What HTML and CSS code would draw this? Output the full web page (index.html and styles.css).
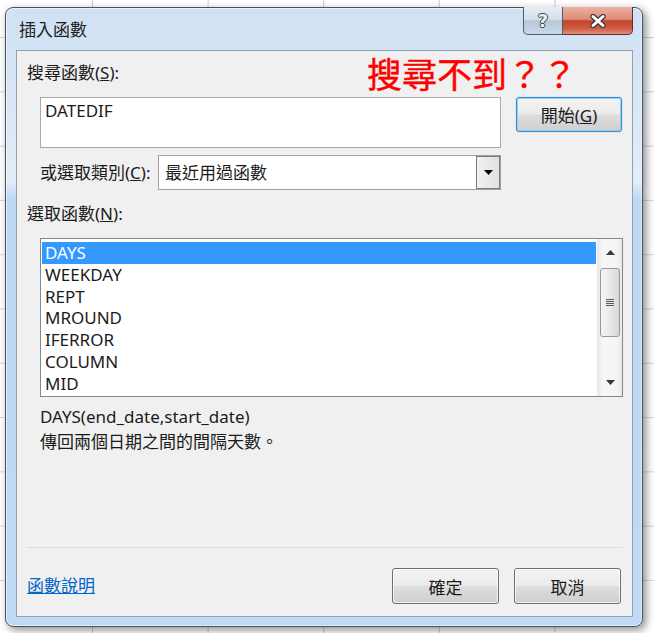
FILE: index.html
```html
<!DOCTYPE html>
<html lang="zh-Hant-TW">
    <head>
        <meta charset="UTF-8" />
        <title>插入函數</title>
        <link rel="stylesheet" href="styles.css">
    </head>
    <body>
    <div class="dialog">
        <div class="titlebar">
            <span class="title">插入函數</span>
            <div class="caption-buttons">
                <span class="cap-btn help">?</span>
                <span class="cap-btn close">
                    <svg width="20" height="14" viewBox="0 0 20 14">
                        <path d="M5 2.5 L15 11.5 M15 2.5 L5 11.5" stroke="#3b3b3b" stroke-width="5.4" stroke-linecap="round" fill="none"/>
                        <path d="M5 2.5 L15 11.5 M15 2.5 L5 11.5" stroke="#ffffff" stroke-width="3" stroke-linecap="round" fill="none"/>
                    </svg>
                </span>
            </div>
        </div>
        <div class="client">
            <div class="search-head">
                <span class="label">搜尋函數(<u>S</u>):</span>
                <span class="note">搜尋不到？？</span>
            </div>
            <div class="search-row">
                <div class="textbox">DATEDIF</div>
                <button class="btn default">開始(<u>G</u>)</button>
            </div>
            <div class="category-row">
                <span class="label cat-label">或選取類別(<u>C</u>):</span>
                <div class="select">
                    <span class="select-text">最近用過函數</span>
                    <span class="drop">
                        <svg width="9" height="5" viewBox="0 0 9 5"><path d="M0 0 H9 L4.5 5 Z" fill="#000"/></svg>
                    </span>
                </div>
            </div>
            <div class="list-head">
                <span class="label">選取函數(<u>N</u>):</span>
            </div>
            <div class="listbox">
                <ul class="items">
                    <li class="selected">DAYS</li>
                    <li>WEEKDAY</li>
                    <li>REPT</li>
                    <li>MROUND</li>
                    <li>IFERROR</li>
                    <li>COLUMN</li>
                    <li>MID</li>
                </ul>
                <div class="scrollbar">
                    <span class="arrow">
                        <svg width="9" height="5" viewBox="0 0 9 5"><path d="M0 5 H9 L4.5 0 Z" fill="#3a3a3a"/></svg>
                    </span>
                    <span class="thumb"><span class="grip"></span></span>
                    <span class="track"></span>
                    <span class="arrow">
                        <svg width="9" height="5" viewBox="0 0 9 5"><path d="M0 0 H9 L4.5 5 Z" fill="#3a3a3a"/></svg>
                    </span>
                </div>
            </div>
            <p class="syntax">DAYS(end_date,start_date)</p>
            <p class="desc">傳回兩個日期之間的間隔天數。</p>
            <div class="spacer"></div>
            <div class="sep"></div>
            <div class="footer">
                <a class="help-link" href="#">函數說明</a>
                <div class="actions">
                    <button class="btn">確定</button>
                    <button class="btn">取消</button>
                </div>
            </div>
        </div>
    </div>
    </body>
</html>
```

FILE: styles.css
```css
    body {
        margin: 0;
        width: 654px;
        height: 633px;
        overflow: hidden;
        background-color: #ffffff;
        background-image:
            linear-gradient(to right, #cdcdcd 1px, transparent 1px),
            linear-gradient(to bottom, #d6d6d6 1px, transparent 1px);
        background-size: 115.6px 100%, 100% 54.3px;
        background-position: 92px 0, 0 37px;
        font-family: "Noto Sans", "Noto Sans CJK TC", sans-serif;
        font-size: 17px;
        color: #1b1b1b;
    }
    .dialog {
        box-sizing: border-box;
        width: 638px;
        height: 620px;
        margin: 7px 0 0 5px;
        padding: 0 9px 9px 10px;
        display: flex;
        flex-direction: column;
        border: 1px solid #46525e;
        border-radius: 8px;
        background: linear-gradient(180deg, #cfe1f4 0, #dbe8f6 18%, #e3edf8 28%, #bcd7f2 31%, #c1daf3 100%);
        box-shadow: inset 0 0 0 1px rgba(255, 255, 255, 0.55), 3px 3px 8px rgba(0, 0, 0, 0.45);
    }
    .titlebar {
        height: 42px;
        display: flex;
        justify-content: space-between;
        align-items: flex-start;
    }
    .title {
        margin: 12px 0 0 3px;
        line-height: 20px;
        font-size: 17px;
        color: #1e1e1e;
    }
    .caption-buttons {
        display: flex;
        margin-top: -1px;
    }
    .cap-btn {
        box-sizing: border-box;
        height: 28px;
        display: flex;
        align-items: center;
        justify-content: center;
    }
    .help {
        width: 40px;
        border: 1px solid #4e5c6b;
        border-top: none;
        border-radius: 0 0 0 5px;
        background: linear-gradient(180deg, #e6edf5 0, #d5e0ec 45%, #b7c8da 52%, #c9d8e7 100%);
        font-family: "DejaVu Sans", sans-serif;
        font-weight: bold;
        font-size: 18px;
        color: #eeeeee;
        text-shadow: 1px 0 0 #3c4650, -1px 0 0 #3c4650, 0 1px 0 #3c4650, 0 -1px 0 #3c4650;
    }
    .close {
        width: 70px;
        border: 1px solid #5b302a;
        border-left: none;
        border-top: none;
        border-radius: 0 0 5px 0;
        background: linear-gradient(180deg, #eab0a2 0, #dd8c79 45%, #c4422b 52%, #cf5d44 80%, #e39079 100%);
    }
    .client {
        flex: 1;
        display: flex;
        flex-direction: column;
        padding: 0 10px 12px 10px;
        border: 1px solid #8fa1b4;
        background-color: #f0f0f0;
    }
    .label {
        line-height: 20px;
        white-space: nowrap;
    }
    .search-head {
        height: 46px;
        display: flex;
        align-items: center;
    }
    .search-head .label {
        margin-bottom: 3px;
    }
    .note {
        margin: 2px 45px 0 auto;
        font-size: 35px;
        line-height: 40px;
        color: #ff0000;
        -webkit-text-stroke: 0.4px #ff0000;
    }
    .search-row {
        display: flex;
        align-items: flex-start;
    }
    .textbox {
        box-sizing: border-box;
        width: 461px;
        height: 51px;
        margin-left: 13px;
        padding: 2px 4px;
        line-height: 22px;
        background: #ffffff;
        border: 1px solid #a8a8a8;
    }
    .btn {
        box-sizing: border-box;
        width: 107px;
        height: 36px;
        padding: 0;
        font-family: "Noto Sans", "Noto Sans CJK TC", sans-serif;
        font-size: 17px;
        color: #1b1b1b;
        border: 1px solid #707070;
        border-radius: 3px;
        background: linear-gradient(180deg, #f3f3f3 0, #ebebeb 48%, #dddddd 52%, #cfcfcf 100%);
        box-shadow: inset 0 0 0 1px rgba(255, 255, 255, 0.7);
    }
    .btn.default {
        margin-left: auto;
        width: 106px;
        height: 35px;
        border-color: #3c8ccf;
        box-shadow: inset 0 0 0 1px #8fd0f3, 0 0 1px #3c8ccf;
    }
    .category-row {
        margin-top: 7px;
        height: 35px;
        display: flex;
        align-items: center;
    }
    .cat-label {
        width: 118px;
        margin-left: 13px;
    }
    .select {
        box-sizing: border-box;
        width: 343px;
        height: 35px;
        display: flex;
        align-items: stretch;
        background: #ffffff;
        border: 1px solid #a0a0a0;
    }
    .select-text {
        flex: 1;
        padding-left: 6px;
        line-height: 33px;
    }
    .drop {
        box-sizing: border-box;
        width: 24px;
        display: flex;
        align-items: center;
        justify-content: center;
        border: 1px solid #7b7b7b;
        background: linear-gradient(90deg, #f2f2f2 0, #e0e0e0 100%);
    }
    .list-head {
        height: 48px;
        display: flex;
        align-items: center;
    }
    .listbox {
        box-sizing: border-box;
        width: 583px;
        height: 159px;
        margin-left: 13px;
        display: flex;
        background: #ffffff;
        border: 1px solid #828790;
    }
    .items {
        flex: 1;
        list-style: none;
        margin: 0;
        padding: 3px 1px 0 1px;
    }
    .items li {
        height: 21.8px;
        line-height: 21.8px;
        padding-left: 3px;
    }
    .items li.selected {
        background-color: #3399ff;
        color: #ffffff;
    }
    .scrollbar {
        width: 24px;
        display: flex;
        flex-direction: column;
        align-items: center;
        background: linear-gradient(90deg, #e9e9e9 0, #f7f7f7 20%, #f4f4f4 80%, #e9e9e9 100%);
        border-left: 1px solid #ececec;
    }
    .arrow {
        height: 27px;
        display: flex;
        align-items: center;
        justify-content: center;
    }
    .thumb {
        box-sizing: border-box;
        width: 20px;
        height: 69px;
        margin-top: 2px;
        display: flex;
        align-items: center;
        justify-content: center;
        border: 1px solid #979797;
        border-radius: 3px;
        background: linear-gradient(90deg, #f5f5f5 0, #e9e9e9 50%, #d6d6d6 100%);
    }
    .grip {
        width: 8px;
        height: 7px;
        background: repeating-linear-gradient(180deg, #5d5d5d 0, #5d5d5d 1px, #e4e4e4 1px, #e4e4e4 2px);
    }
    .track {
        flex: 1;
    }
    .syntax,
    .desc {
        margin: 0 0 0 13px;
        line-height: 25px;
    }
    .syntax {
        margin-top: 7px;
    }
    .spacer {
        flex: 1;
    }
    .sep {
        height: 1px;
        margin: 0 -1px;
        background-color: #d6dfe6;
    }
    .footer {
        margin-top: 20px;
        display: flex;
        align-items: center;
        justify-content: space-between;
    }
    .help-link {
        color: #0066cc;
        line-height: 20px;
        text-decoration: underline;
    }
    .actions {
        display: flex;
        gap: 15px;
        margin-right: 1px;
    }
```
